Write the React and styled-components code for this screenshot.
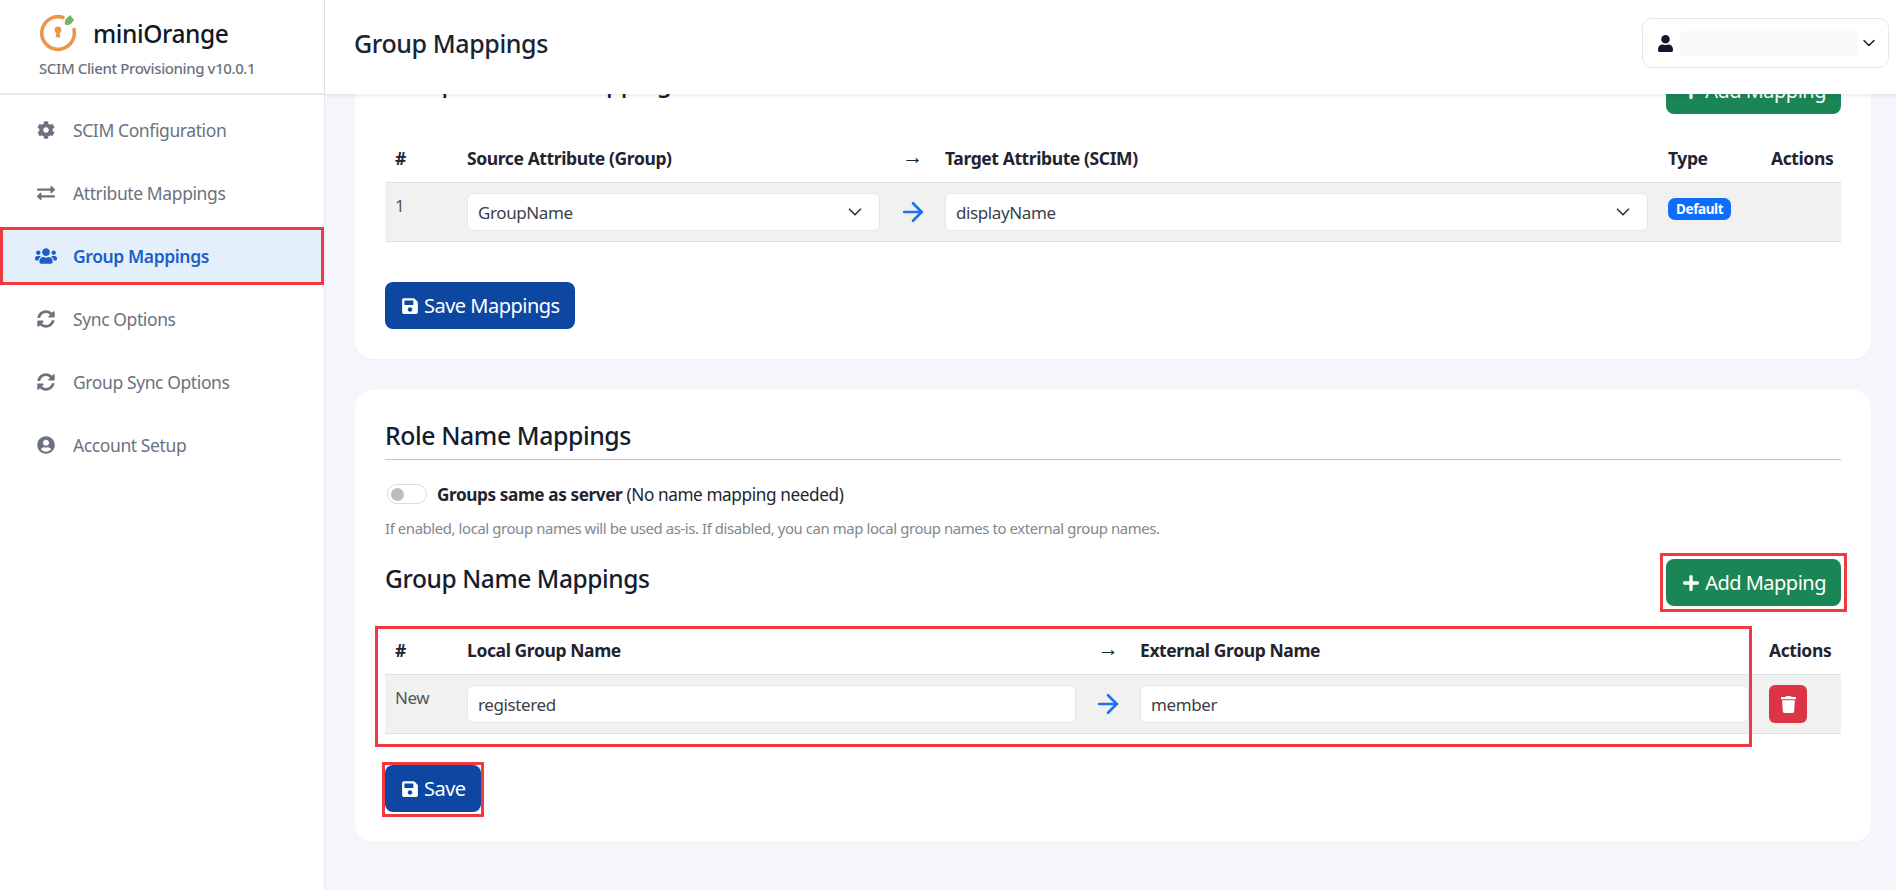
import styled, { createGlobalStyle } from 'styled-components';
import { FaCog, FaExchangeAlt, FaUsers, FaSyncAlt, FaUserCircle, FaUser, FaSave, FaTrash, FaPlus } from 'react-icons/fa';
import { ArrowRight, ChevronDown } from 'lucide-react';

const GlobalStyle = createGlobalStyle`
  * { box-sizing: border-box; }
  html, body { margin: 0; height: 100%; }
  body {
    font-family: "Noto Sans", "Open Sans", sans-serif;
    letter-spacing: -0.025em;
    color: #1f2430;
    background: #f4f6fb;
  }
`;

const navItems = [
  { label: 'SCIM Configuration', icon: FaCog },
  { label: 'Attribute Mappings', icon: FaExchangeAlt },
  { label: 'Group Mappings', icon: FaUsers, active: true },
  { label: 'Sync Options', icon: FaSyncAlt },
  { label: 'Group Sync Options', icon: FaSyncAlt },
  { label: 'Account Setup', icon: FaUserCircle },
];

const attrCols = '72px 433px 45px 723px 103px 80px';
const nameCols = '72px 629px 44px 629px 82px';

function Logo () {
  return (
    <svg width='40' height='40' viewBox='0 0 40 40' aria-hidden='true'>
      <path d='M24 4.500 A16.300 16.300 0 1 0 35 16.500' fill='none' stroke='#e9964f' strokeWidth='3.6' strokeLinecap='round' />
      <circle cx='19' cy='17' r='3.400' fill='#e9964f' />
      <path d='M17.500 18.500h3l.8 6h-4.600z' fill='#e9964f' />
      <path d='M26 11.500C25 7 28 4 32 2c0 2 1 3 3 4-1 4-5 7.500-9 5.500z' fill='#74b56c' />
    </svg>
  );
}

export default function App () {
  return (
    <Page>
      <GlobalStyle />
      <Sidebar>
        <Brand>
          <BrandRow>
            <Logo />
            <BrandName>miniOrange</BrandName>
          </BrandRow>
          <BrandSub>SCIM Client Provisioning v10.0.1</BrandSub>
        </Brand>
        <Nav>
          {navItems.map(({ label, icon: Icon, active }) => (
            <NavItem key={label} $active={active}>
              <NavIcon><Icon size={active ? 22 : 18} /></NavIcon>
              {label}
            </NavItem>
          ))}
        </Nav>
      </Sidebar>
      <Main>
        <Header>
          <PageTitle>Group Mappings</PageTitle>
          <UserMenu>
            <FaUser size={17} />
            <UserName />
            <ChevronDown size={20} strokeWidth={1.7} />
          </UserMenu>
        </Header>
        <Content>
          <ScrolledCard>
            <TitleRow>
              <SubTitle $raised>Group Attribute Mappings</SubTitle>
              <Button $color='#1b8655'><FaPlus size={18} /> Add Mapping</Button>
            </TitleRow>
            <Table>
              <HeadRow $cols={attrCols}>
                <HeadCell>#</HeadCell>
                <HeadCell>Source Attribute (Group)</HeadCell>
                <ArrowHead>→</ArrowHead>
                <HeadCell>Target Attribute (SCIM)</HeadCell>
                <HeadCell>Type</HeadCell>
                <HeadCell>Actions</HeadCell>
              </HeadRow>
              <BodyRow $cols={attrCols}>
                <NumberCell>1</NumberCell>
                <Cell><Field>GroupName<ChevronDown size={22} strokeWidth={1.8} color='#333' /></Field></Cell>
                <ArrowCell><ArrowRight size={30} strokeWidth={2.1} /></ArrowCell>
                <Cell><Field>displayName<ChevronDown size={22} strokeWidth={1.8} color='#333' /></Field></Cell>
                <Cell><Badge>Default</Badge></Cell>
                <Cell />
              </BodyRow>
            </Table>
            <SaveMappingsRow>
              <Button $color='#0d47a1'><FaSave size={18} /> Save Mappings</Button>
            </SaveMappingsRow>
          </ScrolledCard>

          <Card>
            <SectionTitle>Role Name Mappings</SectionTitle>
            <ToggleRow>
              <Toggle><Knob /></Toggle>
              <span><strong>Groups same as server</strong> (No name mapping needed)</span>
            </ToggleRow>
            <Help>If enabled, local group names will be used as-is. If disabled, you can map local group names to external group names.</Help>
            <TitleRow $top={21}>
              <SubTitle>Group Name Mappings</SubTitle>
              <Marked $inset='-6px'>
                <Button $color='#1b8655'><FaPlus size={18} /> Add Mapping</Button>
              </Marked>
            </TitleRow>
            <Table>
              <TableMark />
              <HeadRow $cols={nameCols}>
                <HeadCell>#</HeadCell>
                <HeadCell>Local Group Name</HeadCell>
                <ArrowHead>→</ArrowHead>
                <HeadCell>External Group Name</HeadCell>
                <HeadCell>Actions</HeadCell>
              </HeadRow>
              <BodyRow $cols={nameCols}>
                <NumberCell>New</NumberCell>
                <Cell><Field>registered</Field></Cell>
                <ArrowCell><ArrowRight size={30} strokeWidth={2.1} /></ArrowCell>
                <Cell><Field>member</Field></Cell>
                <Cell><DeleteButton><FaTrash size={17} /></DeleteButton></Cell>
              </BodyRow>
            </Table>
            <SaveRow>
              <Marked $inset='-3px -3px -5px'>
                <Button $color='#0d47a1'><FaSave size={18} /> Save</Button>
              </Marked>
            </SaveRow>
          </Card>
        </Content>
      </Main>
    </Page>
  );
}

const Page = styled.div`
  display: flex;
  height: 100vh;
  overflow: hidden;
`;
const Sidebar = styled.aside`
  width: 325px;
  flex-shrink: 0;
  background: #fff;
  border-right: 1px solid #e6e8ec;
`;
const Brand = styled.div`
  height: 95px;
  padding: 13px 0 0 39px;
  border-bottom: 2px solid #e8e8ea;
`;
const BrandRow = styled.div`
  display: flex;
  align-items: center;
  gap: 14px;
`;
const BrandName = styled.div`
  font-size: 24.5px;
  font-weight: 500;
  color: #111827;
`;
const BrandSub = styled.div`
  margin-top: 5px;
  font-size: 15px;
  font-weight: 500;
  line-height: 20px;
  color: #6b7280;
`;
const Nav = styled.nav`
  display: flex;
  flex-direction: column;
  gap: 5px;
  padding-top: 6px;
`;
const NavItem = styled.div`
  height: 58px;
  display: flex;
  align-items: center;
  gap: 15px;
  padding-left: 34px;
  font-size: 17.5px;
  font-weight: ${props => props.$active ? 600 : 400};
  color: ${props => props.$active ? '#1c5fc9' : '#6b7280'};
  background: ${props => props.$active ? '#e3f0fc' : 'transparent'};
  outline: ${props => props.$active ? '3px solid #f03a40' : 'none'};
  outline-offset: -3px;
`;
const NavIcon = styled.span`
  width: 24px;
  display: flex;
  justify-content: center;
`;
const Main = styled.main`
  flex: 1;
  min-width: 0;
  display: flex;
  flex-direction: column;
`;
const Header = styled.header`
  height: 94px;
  flex-shrink: 0;
  display: flex;
  align-items: center;
  justify-content: space-between;
  padding: 0 7px 8px 29px;
  background: #fff;
  box-shadow: 0 2px 4px rgba(0, 0, 0, 0.08);
  position: relative;
  z-index: 2;
`;
const PageTitle = styled.h1`
  margin: 0;
  font-size: 25px;
  font-weight: 500;
  color: #1a2233;
`;
const UserMenu = styled.div`
  width: 247px;
  height: 50px;
  display: flex;
  align-items: center;
  padding-left: 14px;
  border: 1px solid #e5e7eb;
  border-radius: 10px;
  color: #14162e;
`;
const UserName = styled.div`
  width: 178px;
  height: 25px;
  margin: 0 1px 0 6px;
  background: #f9f9f9;
  border-radius: 4px;
`;
const Content = styled.div`
  flex: 1;
  min-height: 0;
  overflow: hidden;
  padding: 0 25px 0 30px;
`;
const Card = styled.section`
  background: #fff;
  border-radius: 18px;
  padding: 30px;
  margin-bottom: 30px;
  box-shadow: 0 1px 2px rgba(0, 0, 0, 0.03);
`;
const ScrolledCard = styled(Card)`
  margin-top: -57px;
  margin-bottom: 31px;
`;
const SectionTitle = styled.h2`
  margin: 0 0 25px;
  padding-bottom: 9px;
  border-bottom: 1px solid #c4c4c4;
  font-size: 24.8px;
  font-weight: 500;
  line-height: 30px;
  color: #141c2e;
`;
const SubTitle = styled.h3`
  margin: ${props => props.$raised ? '-4px' : '0'} 0 0;
  padding-top: 4px;
  font-size: 24.5px;
  font-weight: 500;
  line-height: 32px;
  color: #141c2e;
`;
const TitleRow = styled.div`
  display: flex;
  justify-content: space-between;
  align-items: flex-start;
  margin: ${props => props.$top || 0}px 0 22px;
`;
const Button = styled.button`
  height: 47px;
  display: inline-flex;
  align-items: center;
  gap: 5px;
  padding: 0 15px 0 16px;
  color: #fff;
  background: ${props => props.$color};
  border: none;
  border-radius: 8px;
  font: inherit;
  font-size: 20px;
  letter-spacing: -0.025em;
`;
const Marked = styled.div`
  position: relative;
  &::after {
    content: '';
    position: absolute;
    inset: ${props => props.$inset};
    border: 3px solid #f03a40;
    pointer-events: none;
  }
`;
const Table = styled.div`
  position: relative;
  width: 1456px;
`;
const TableMark = styled.div`
  position: absolute;
  top: -2px;
  left: -10px;
  right: 89px;
  bottom: -13px;
  border: 3px solid #f03a40;
  pointer-events: none;
`;
const HeadRow = styled.div`
  display: grid;
  grid-template-columns: ${props => props.$cols};
  height: 46px;
  padding-bottom: 2px;
  align-items: center;
`;
const HeadCell = styled.div`
  padding: 0 10px;
  font-size: 17.5px;
  font-weight: 700;
  color: #1f2430;
`;
const ArrowHead = styled(HeadCell)`
  padding: 0 0 4px;
  text-align: center;
  font-size: 21px;
  font-weight: 400;
`;
const BodyRow = styled.div`
  display: grid;
  grid-template-columns: ${props => props.$cols};
  height: 60px;
  background: #f1f1f1;
  border-top: 1px solid #dee2e6;
  border-bottom: 1px solid #dee2e6;
`;
const Cell = styled.div`
  padding: 10px;
`;
const NumberCell = styled(Cell)`
  padding-top: 11px;
  font-size: 17px;
  line-height: 24px;
  color: #555;
`;
const ArrowCell = styled.div`
  display: flex;
  align-items: center;
  justify-content: center;
  color: #1d72f3;
`;
const Field = styled.div`
  height: 38px;
  display: flex;
  align-items: center;
  justify-content: space-between;
  padding: 0 13px 0 10px;
  background: #fff;
  border: 1px solid #e4e6ea;
  border-radius: 6px;
  font-size: 17px;
  color: #3a3f47;
`;
const Badge = styled.span`
  display: inline-flex;
  align-items: center;
  height: 22px;
  margin-top: 5px;
  padding: 0 8px;
  background: #0d6efd;
  border-radius: 7px;
  color: #fff;
  font-size: 13.5px;
  font-weight: 700;
`;
const DeleteButton = styled.button`
  width: 38px;
  height: 38px;
  display: flex;
  align-items: center;
  justify-content: center;
  padding: 0;
  color: #fff;
  background: #dc3545;
  border: none;
  border-radius: 6px;
`;
const SaveMappingsRow = styled.div`
  margin-top: 40px;
  display: flex;
`;
const SaveRow = styled.div`
  margin-top: 31px;
  display: flex;
`;
const ToggleRow = styled.div`
  display: flex;
  align-items: center;
  gap: 10px;
  height: 20px;
  margin-top: -1px;
  font-size: 17.2px;
  color: #1f2430;
`;
const Toggle = styled.div`
  width: 40px;
  height: 20px;
  margin-left: 2px;
  display: flex;
  align-items: center;
  padding-left: 3px;
  background: #fff;
  border: 1px solid #dcdcdc;
  border-radius: 10px;
`;
const Knob = styled.div`
  width: 13px;
  height: 13px;
  border-radius: 50%;
  background: #bdbdbd;
`;
const Help = styled.div`
  margin-top: 14px;
  font-size: 14.9px;
  line-height: 20px;
  color: #808890;
`;
